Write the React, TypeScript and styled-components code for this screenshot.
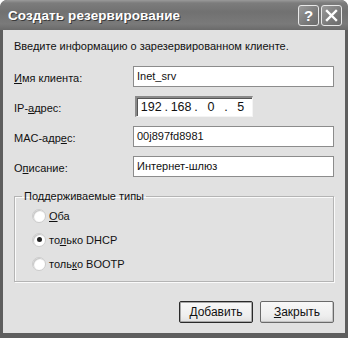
import React from 'react';
import styled, { createGlobalStyle } from 'styled-components';

const GlobalStyle = createGlobalStyle`
  html, body {
    margin: 0;
    padding: 0;
    background: #ffffff;
  }
  body {
    font-family: 'Liberation Sans', Arial, sans-serif;
    font-size: 11px;
    color: #111;
  }
`;

const fields = [
  { label: 'Имя клиента:', key: 0, value: 'Inet_srv' },
  { label: 'IP-адрес:', key: 3, ip: ['192', '168', '0', '5'] },
  { label: 'MAC-адрес:', key: 7, value: '00j897fd8981' },
  { label: 'Описание:', key: 1, value: 'Интернет-шлюз' },
];

const radios = [
  { label: 'Оба', key: 0, checked: false },
  { label: 'только DHCP', key: 2, checked: true },
  { label: 'только BOOTP', key: 4, checked: false },
];

// underline the access-key letter
const Hotkey = ({ text, at }: { text: string; at: number }) => (
  <>
    {text.slice(0, at)}
    <u>{text[at]}</u>
    {text.slice(at + 1)}
  </>
);

export default function App() {
  return (
    <>
      <GlobalStyle />
      <Window>
        <TitleBar>
          <Title>Создать резервирование</Title>
          <TitleButtons>
            <CaptionButton>?</CaptionButton>
            <CaptionButton>
              <svg width="13" height="13" viewBox="0 0 13 13">
                <path d="M2 2 L11 11 M11 2 L2 11" stroke="#fff" strokeWidth="2.4" strokeLinecap="square" />
              </svg>
            </CaptionButton>
          </TitleButtons>
        </TitleBar>
        <Body>
          <Intro>Введите информацию о зарезервированном клиенте.</Intro>
          <Form>
            {fields.map((f) => (
              <React.Fragment key={f.label}>
                <Label>
                  <Hotkey text={f.label} at={f.key} />
                </Label>
                {f.ip ? (
                  <IpBox>
                    {f.ip.map((part, i) => (
                      <React.Fragment key={i}>
                        {i > 0 && <IpDot>.</IpDot>}
                        <IpPart>{part}</IpPart>
                      </React.Fragment>
                    ))}
                  </IpBox>
                ) : (
                  <TextBox>{f.value}</TextBox>
                )}
              </React.Fragment>
            ))}
          </Form>
          <GroupBox>
            <Legend>Поддерживаемые типы</Legend>
            {radios.map((r) => (
              <RadioRow key={r.label}>
                <RadioCircle $checked={r.checked} />
                <span>
                  <Hotkey text={r.label} at={r.key} />
                </span>
              </RadioRow>
            ))}
          </GroupBox>
          <ButtonRow>
            <PushButton $default>
              <Hotkey text="Добавить" at={0} />
            </PushButton>
            <PushButton>
              <Hotkey text="Закрыть" at={0} />
            </PushButton>
          </ButtonRow>
        </Body>
      </Window>
    </>
  );
}

const Window = styled.div`
  width: 348px;
  height: 338px;
  box-sizing: border-box;
  background: #5e5e5e;
  border-radius: 7px 7px 0 0;
  padding: 0 3px 5px 3px;
  display: flex;
  flex-direction: column;
  overflow: hidden;
`;

const TitleBar = styled.div`
  height: 30px;
  flex: none;
  margin: 0 -3px;
  padding: 0 6px 0 8px;
  display: flex;
  align-items: center;
  justify-content: space-between;
  background: linear-gradient(#9a9a9a 0px, #7c7c7c 3px, #717171 12px, #7a7a7a 24px, #6a6a6a 30px);
  border-radius: 7px 7px 0 0;
`;

const Title = styled.div`
  color: #fff;
  font-family: 'Liberation Sans', Arial, sans-serif;
  font-weight: bold;
  font-size: 13.5px;
  letter-spacing: 0.1px;
  text-shadow: 1px 1px 0 #3a3a3a;
`;

const TitleButtons = styled.div`
  display: flex;
  gap: 2px;
`;

const CaptionButton = styled.div`
  width: 19px;
  height: 19px;
  border: 1px solid #e8e8e8;
  border-radius: 3px;
  background: linear-gradient(135deg, #9a9a9a, #7a7a7a 60%, #6c6c6c);
  color: #fff;
  font-weight: bold;
  font-size: 15px;
  display: flex;
  align-items: center;
  justify-content: center;
`;

const Body = styled.div`
  flex: 1;
  background: #e1e1e1;
  padding: 10px 11px 10px 11px;
  display: flex;
  flex-direction: column;
`;

const Intro = styled.div`
  line-height: 13px;
`;

const Form = styled.div`
  margin-top: 13px;
  display: grid;
  grid-template-columns: 119px 1fr;
  grid-auto-rows: 21px;
  row-gap: 9px;
  align-items: center;
`;

const Label = styled.div`
  line-height: 14px;
  padding-top: 3px;
`;

const TextBox = styled.div`
  height: 21px;
  box-sizing: border-box;
  background: #fff;
  border: 1px solid #8c8c8c;
  padding: 0 3px;
  line-height: 19px;
`;

const IpBox = styled.div`
  width: 118px;
  height: 21px;
  margin-left: 2px;
  box-sizing: border-box;
  background: #fff;
  border-top: 2px solid #8a8a8a;
  border-left: 2px solid #8a8a8a;
  border-right: 1px solid #f4f4f4;
  border-bottom: 1px solid #f4f4f4;
  box-shadow: inset 1px 1px 0 #555;
  display: flex;
  align-items: center;
  padding: 0 0 0 3px;
  font-size: 12.5px;
`;

const IpPart = styled.span`
  width: 24px;
  text-align: center;
`;

const IpDot = styled.span`
  width: 8px;
  text-align: center;
`;

const GroupBox = styled.fieldset`
  margin: 13px 0 0 0;
  padding: 6px 0 6px 6px;
  height: 92px;
  box-sizing: border-box;
  border: 1px solid #b4b4b4;
  box-shadow: 1px 1px 0 #fafafa, inset 1px 1px 0 #fafafa;
  display: flex;
  flex-direction: column;
  gap: 9px;
`;

const Legend = styled.legend`
  padding: 0 2px;
  margin-left: 1px;
`;

const RadioRow = styled.div`
  display: flex;
  align-items: center;
  gap: 3px;
  height: 15px;
  padding-left: 11px;
`;

const RadioCircle = styled.span<{ $checked?: boolean }>`
  width: 12px;
  height: 12px;
  border-radius: 50%;
  background: radial-gradient(circle at 60% 60%, #fff 55%, #e6e6e6);
  border: 1px solid #cdcdcd;
  box-shadow: inset 1px 1px 1px #c4c4c4;
  position: relative;
  flex: none;

  &::after {
    content: '';
    display: ${(p) => (p.$checked ? 'block' : 'none')};
    position: absolute;
    left: 3.5px;
    top: 3.5px;
    width: 5px;
    height: 5px;
    border-radius: 50%;
    background: #222;
  }
`;

const ButtonRow = styled.div`
  margin-top: auto;
  display: flex;
  justify-content: flex-end;
  gap: 7px;
`;

const PushButton = styled.div<{ $default?: boolean }>`
  width: 74px;
  height: 22px;
  box-sizing: border-box;
  display: flex;
  align-items: center;
  justify-content: center;
  border-radius: 2px;
  background: linear-gradient(#f8f8f8, #eeeeee 70%, #e0e0e0);
  border: 1px solid ${(p) => (p.$default ? '#2a2a2a' : '#6a6a6a')};
  box-shadow: ${(p) =>
    p.$default ? 'inset 0 0 0 1px #a8a8a8' : 'inset -1px -1px 0 #c4c4c4'};
  font-size: 12px;
`;
